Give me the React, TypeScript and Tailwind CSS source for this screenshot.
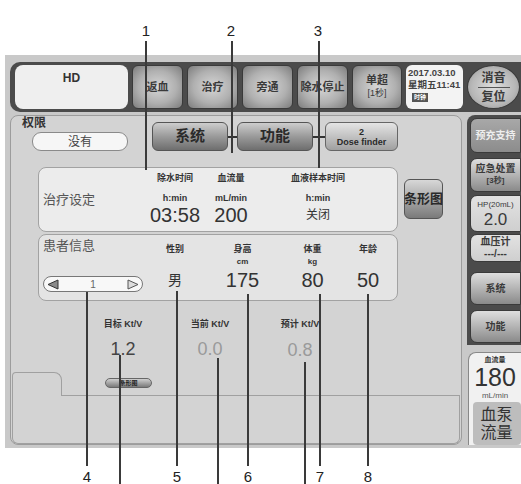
import React from "react";

function TopBtn({ w, children }: { w: string; children: React.ReactNode }) {
  return (
    <div
      className={`${w} h-[44px] rounded-[6px] border border-[#3a3a3a] bg-[radial-gradient(ellipse_at_center,#d6d6d6_0%,#b0b0b0_55%,#7c7c7c_100%)] flex flex-col items-center justify-center text-[11px] font-bold leading-[13px] text-[#3a3a3a]`}
    >
      {children}
    </div>
  );
}

function SideBtn({ h, children, light }: { h: string; children: React.ReactNode; light?: boolean }) {
  return (
    <div
      className={`${h} w-full rounded-l-[7px] border border-[#3a3a3a] ${
        light
          ? "bg-[linear-gradient(to_bottom,#e2e2e2,#cfcfcf)]"
          : "bg-[linear-gradient(to_bottom,#dedede_0%,#b4b4b4_50%,#8a8a8a_100%)]"
      } flex flex-col items-center justify-center text-[10px] font-bold leading-[12px] text-[#3a3a3a]`}
    >
      {children}
    </div>
  );
}

function Line({ cls }: { cls: string }) {
  return <div className={`absolute w-[2px] bg-[#3a3a3a] ${cls}`} />;
}

function Num({ cls, n }: { cls: string; n: string }) {
  return (
    <div className={`absolute w-[20px] h-[16px] text-center text-[15px] leading-[16px] text-[#222] ${cls}`}>{n}</div>
  );
}

export default function App() {
  return (
    <div className="relative w-[521px] h-[484px] bg-white overflow-hidden font-['Liberation_Sans','Noto_Sans_CJK_SC',sans-serif] text-[#333]">
      <div className="ml-[5px] mt-[55px] w-[516px] h-[393px] bg-[#c9c9c9] flex flex-col">
        {/* top bar */}
        <div className="ml-[5px] mt-[7px] h-[50px] bg-[#4b4b4b] rounded-l-[10px] flex items-center pl-[5px] gap-[4px]">
          <div className="w-[113px] h-[44px] bg-[#efefef] rounded-[8px] flex justify-center pt-[6px] text-[12px] leading-[14px] font-bold text-[#333]">
            HD
          </div>
          <TopBtn w="w-[51px]">返血</TopBtn>
          <TopBtn w="w-[51px]">治疗</TopBtn>
          <TopBtn w="w-[51px]">旁通</TopBtn>
          <TopBtn w="w-[51px]">除水停止</TopBtn>
          <TopBtn w="w-[50px]">
            <span>单超</span>
            <span className="text-[9px] font-normal">[1秒]</span>
          </TopBtn>
          <div className="w-[57px] h-[44px] bg-[#f3f3f3] rounded-[6px] flex flex-col pl-[2px] pt-[2px] text-[9.5px] leading-[12px] font-bold text-[#444]">
            <span>2017.03.10</span>
            <span>星期五11:41</span>
            <span className="mt-[2px] ml-[4px] w-[16px] h-[9px] bg-[#555] text-white text-[6px] leading-[9px] text-center">时钟</span>
          </div>
          <div className="w-[53px] h-[44px] rounded-[50%] border border-[#3a3a3a] bg-[radial-gradient(ellipse_at_center,#dedede_0%,#b8b8b8_60%,#8a8a8a_100%)] flex flex-col items-center justify-center text-[12px] font-bold leading-[14px] text-[#3a3a3a]">
            <span>消音</span>
            <span className="w-[32px] h-[1px] bg-[#555] my-[2px]" />
            <span>复位</span>
          </div>
        </div>

        {/* main row */}
        <div className="flex mt-[3px]">
          {/* main panel */}
          <div className="ml-[5px] w-[452px] h-[330px] border border-[#9c9c9c] rounded-[8px] bg-[#d3d3d3] flex flex-col">
            {/* row1 */}
            <div className="flex h-[37px]">
              <div className="w-[129px] flex flex-col">
                <span className="pl-[11px] mt-[1px] text-[12px] leading-[13px] font-bold text-[#333]">权限</span>
                <div className="ml-[21px] mt-[2px] w-[96px] h-[19px] rounded-[9px] border border-[#8a8a8a] bg-[#f6f6f6] flex items-center justify-center text-[12px] text-[#444]">
                  没有
                </div>
              </div>
              <div className="ml-[12px] mt-[6px] w-[76px] h-[29px] rounded-[6px] border border-[#555] bg-[linear-gradient(to_bottom,#cdcdcd_0%,#9a9a9a_50%,#6e6e6e_100%)] flex items-center justify-center text-[15px] font-bold text-[#2a2a2a]">
                系统
              </div>
              <div className="mt-[20px] w-[9px] h-[2px] bg-[#333]" />
              <div className="mt-[6px] w-[76px] h-[29px] rounded-[6px] border border-[#555] bg-[linear-gradient(to_bottom,#cdcdcd_0%,#9a9a9a_50%,#6e6e6e_100%)] flex items-center justify-center text-[15px] font-bold text-[#2a2a2a]">
                功能
              </div>
              <div className="mt-[20px] w-[12px] h-[2px] bg-[#333]" />
              <div className="mt-[6px] w-[73px] h-[29px] rounded-[6px] border border-[#666] bg-[linear-gradient(to_bottom,#e4e4e4_0%,#c2c2c2_50%,#a0a0a0_100%)] flex flex-col items-center justify-center text-[9px] leading-[10px] font-bold text-[#2a2a2a]">
                <span>2</span>
                <span>Dose finder</span>
              </div>
            </div>

            {/* row2: treatment settings */}
            <div className="flex mt-[14px]">
              <div className="ml-[27px] w-[360px] h-[65px] rounded-[8px] border border-[#a2a2a2] bg-[#ececec] flex">
                <div className="w-[106px] pl-[4px] flex items-center text-[13px] text-[#555]">治疗设定</div>
                <div className="w-[60px] flex flex-col items-center pt-[4px]">
                  <span className="text-[9px] leading-[12px] font-bold">除水时间</span>
                  <span className="mt-[8px] text-[9px] leading-[12px] font-bold">h:min</span>
                  <span className="text-[20px] leading-[22px] text-[#333]">03:58</span>
                </div>
                <div className="w-[52px] flex flex-col items-center pt-[4px]">
                  <span className="text-[9px] leading-[12px] font-bold">血流量</span>
                  <span className="mt-[8px] text-[9px] leading-[12px] font-bold">mL/min</span>
                  <span className="text-[20px] leading-[22px] text-[#333]">200</span>
                </div>
                <div className="ml-[23px] w-[76px] flex flex-col items-center pt-[4px]">
                  <span className="text-[9px] leading-[12px] font-bold whitespace-nowrap">血液样本时间</span>
                  <span className="mt-[8px] text-[9px] leading-[12px] font-bold">h:min</span>
                  <span className="text-[12px] leading-[22px] text-[#333]">关闭</span>
                </div>
              </div>
              <div className="ml-[6px] mt-[12px] w-[39px] h-[40px] rounded-[6px] border border-[#555] bg-[linear-gradient(to_bottom,#d8d8d8_0%,#a8a8a8_50%,#7a7a7a_100%)] flex items-center justify-center text-[13px] font-bold text-[#2a2a2a] whitespace-nowrap">
                条形图
              </div>
            </div>

            {/* row3: patient info */}
            <div className="ml-[27px] mt-[2px] w-[360px] h-[67px] rounded-[8px] border border-[#a2a2a2] bg-[#e4e4e4] flex">
              <div className="w-[106px] pl-[4px] flex flex-col">
                <span className="pt-[3px] text-[13px] leading-[16px] text-[#555]">患者信息</span>
                <div className="mt-[22px] w-[100px] h-[16px] rounded-full border border-[#777] bg-[#f8f8f8] flex items-center justify-between px-[3px]">
                  <svg width="12" height="11" viewBox="0 0 12 11">
                    <polygon points="11,1 1,5.5 11,10" fill="#8a8a8a" stroke="#333" strokeWidth="1" />
                  </svg>
                  <span className="text-[10px] text-[#666]">1</span>
                  <svg width="12" height="11" viewBox="0 0 12 11">
                    <polygon points="1,1 11,5.5 1,10" fill="#dcdcdc" stroke="#555" strokeWidth="1" />
                  </svg>
                </div>
              </div>
              <div className="ml-[5px] w-[50px] flex flex-col items-center pt-[8px]">
                <span className="text-[9px] leading-[12px] font-bold">性别</span>
                <span className="mt-[1px] text-[8px] leading-[11px] invisible">-</span>
                <span className="mt-[2px] text-[14px] leading-[22px]">男</span>
              </div>
              <div className="ml-[15px] w-[55px] flex flex-col items-center pt-[8px]">
                <span className="text-[9px] leading-[12px] font-bold">身高</span>
                <span className="mt-[1px] text-[8px] leading-[11px] font-bold">cm</span>
                <span className="mt-[2px] text-[20px] leading-[22px]">175</span>
              </div>
              <div className="ml-[15px] w-[55px] flex flex-col items-center pt-[8px]">
                <span className="text-[9px] leading-[12px] font-bold">体重</span>
                <span className="mt-[1px] text-[8px] leading-[11px] font-bold">kg</span>
                <span className="mt-[2px] text-[20px] leading-[22px]">80</span>
              </div>
              <div className="ml-[3px] w-[50px] flex flex-col items-center pt-[8px]">
                <span className="text-[9px] leading-[12px] font-bold">年龄</span>
                <span className="mt-[1px] text-[8px] leading-[11px] invisible">-</span>
                <span className="mt-[2px] text-[20px] leading-[22px]">50</span>
              </div>
            </div>

            {/* row4: Kt/V */}
            <div className="flex mt-[17px] ml-[77px]">
              <div className="w-[70px] flex flex-col items-center">
                <span className="text-[9px] leading-[12px] font-bold">目标 Kt/V</span>
                <span className="mt-[9px] text-[18px] leading-[20px] text-[#444]">1.2</span>
              </div>
              <div className="ml-[17px] w-[70px] flex flex-col items-center">
                <span className="text-[9px] leading-[12px] font-bold">当前 Kt/V</span>
                <span className="mt-[9px] text-[18px] leading-[20px] text-[#9a9a9a]">0.0</span>
              </div>
              <div className="ml-[20px] w-[70px] flex flex-col items-center">
                <span className="text-[9px] leading-[12px] font-bold">预计 Kt/V</span>
                <span className="mt-[10px] text-[18px] leading-[20px] text-[#9a9a9a]">0.8</span>
              </div>
            </div>

            {/* row5: tab area */}
            <div className="mt-[12px] mx-[1px] flex-1 flex flex-col">
              <div className="flex h-[24px]">
                <div className="w-[50px] border-t border-l border-r border-[#a0a0a0] rounded-tr-[8px] rounded-tl-[4px]" />
                <div className="flex-1 border-b border-[#a0a0a0]">
                  <div className="ml-[43px] mt-[6px] w-[47px] h-[10px] rounded-full bg-[linear-gradient(to_bottom,#cfcfcf,#7a7a7a)] border border-[#666] flex items-center justify-center text-[6px] font-bold text-[#222]">
                    条形图
                  </div>
                </div>
              </div>
              <div className="flex-1 border-l border-r border-b border-[#a0a0a0] rounded-b-[6px]" />
            </div>
          </div>

          {/* sidebar */}
          <div className="ml-[5px] w-[54px] flex flex-col">
            <div className="h-[230px] bg-[#4b4b4b] rounded-tl-[8px] pl-[3px] pt-[3px] flex flex-col">
              <div className="h-[35px] w-full rounded-l-[7px] border border-[#3a3a3a] bg-[linear-gradient(to_bottom,#a8a8a8,#8c8c8c)] flex items-center justify-center text-[10px] font-bold text-[#eeeeee]">
                预充支持
              </div>
              <div className="mt-[5px]">
                <SideBtn h="h-[34px]">
                  <span>应急处置</span>
                  <span className="text-[8px]">[3秒]</span>
                </SideBtn>
              </div>
              <div className="mt-[3px]">
                <SideBtn h="h-[37px]" light>
                  <span className="text-[8px] font-normal">HP(20mL)</span>
                  <span className="text-[17px] leading-[18px] font-normal">2.0</span>
                </SideBtn>
              </div>
              <div className="mt-[2px]">
                <SideBtn h="h-[28px]" light>
                  <span>血压计</span>
                  <span>---/---</span>
                </SideBtn>
              </div>
              <div className="mt-[10px]">
                <SideBtn h="h-[33px]">系统</SideBtn>
              </div>
              <div className="mt-[5px]">
                <SideBtn h="h-[33px]">功能</SideBtn>
              </div>
            </div>
            <div className="mt-[7px] ml-[1px] h-[93px] rounded-tl-[8px] border-l border-t border-[#888] bg-[#f1f1f1] flex flex-col items-center">
              <span className="mt-[2px] text-[7px] leading-[9px] font-bold">血流量</span>
              <span className="text-[25px] leading-[27px] text-[#333]">180</span>
              <span className="text-[8px] leading-[9px] text-[#555]">mL/min</span>
              <div className="mt-[2px] ml-[3px] w-[48px] flex-1 rounded-[4px] bg-[#bdbdbd] flex flex-col items-center justify-center text-[16px] leading-[18px] text-[#333]">
                <span>血泵</span>
                <span>流量</span>
              </div>
            </div>
          </div>
        </div>
      </div>

      {/* callouts */}
      <Num cls="left-[136px] top-[23px]" n="1" />
      <Num cls="left-[221px] top-[23px]" n="2" />
      <Num cls="left-[308px] top-[23px]" n="3" />
      <Line cls="left-[145px] top-[41px] h-[129px]" />
      <Line cls="left-[231px] top-[41px] h-[112px]" />
      <Line cls="left-[318px] top-[41px] h-[127px]" />

      <Line cls="left-[86px] top-[292px] h-[174px]" />
      <Line cls="left-[119px] top-[355px] h-[129px]" />
      <Line cls="left-[176px] top-[291px] h-[175px]" />
      <Line cls="left-[217px] top-[358px] h-[126px]" />
      <Line cls="left-[247px] top-[294px] h-[172px]" />
      <Line cls="left-[304px] top-[362px] h-[122px]" />
      <Line cls="left-[319px] top-[294px] h-[172px]" />
      <Line cls="left-[367px] top-[294px] h-[172px]" />
      <Num cls="left-[77px] top-[469px]" n="4" />
      <Num cls="left-[167px] top-[469px]" n="5" />
      <Num cls="left-[238px] top-[469px]" n="6" />
      <Num cls="left-[310px] top-[469px]" n="7" />
      <Num cls="left-[358px] top-[469px]" n="8" />
    </div>
  );
}
